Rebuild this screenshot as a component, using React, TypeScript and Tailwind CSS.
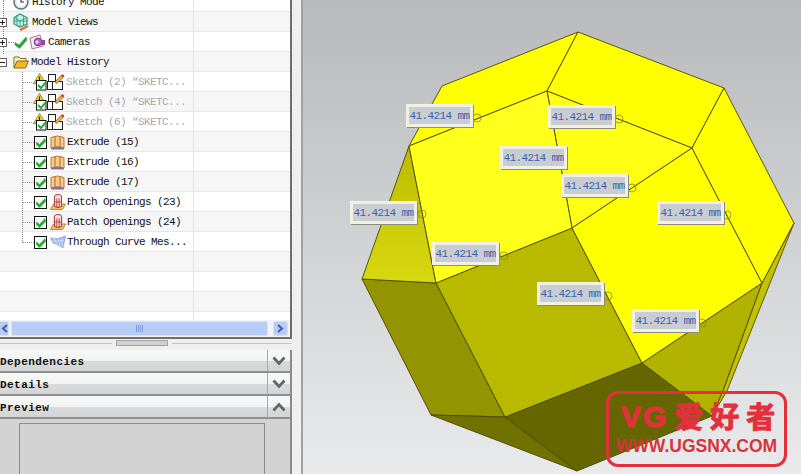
const MONO = "font-['Liberation_Mono',monospace]";

function Check() {
  return (
    <svg width="13" height="13" viewBox="0 0 13 13" className="shrink-0">
      <rect x="0.5" y="0.5" width="12" height="12" fill="#f4fff4" stroke="#111" />
      <path d="M2.5 6 L5.5 8.5 L11 2.5 L11.5 5.5 L5.5 11.5 L2.5 8.5 Z" fill="#25a535" stroke="#25a535" strokeWidth="0.6" />
    </svg>
  );
}

function ClockIcon() {
  return (
    <svg width="16" height="16" viewBox="0 0 16 16" className="shrink-0">
      <circle cx="8" cy="8" r="7" fill="#dfe7f2" stroke="#5d6f8c" strokeWidth="1.4" />
      <circle cx="8" cy="8" r="4.6" fill="#fff" />
      <path d="M8 4.5 V8 H11" fill="none" stroke="#333" strokeWidth="1.2" />
    </svg>
  );
}

function ViewsIcon() {
  return (
    <svg width="16" height="18" viewBox="0 0 16 18" className="shrink-0">
      <path d="M7 1 L14 4.5 V11 L7 14 L1 11 V4.5 Z" fill="#c9efe2" stroke="#1f9c7c" strokeWidth="1.2" />
      <path d="M1 4.5 L7 8 L14 4.5 M7 8 V14 M1 8 L14 8 M4 2.5 V12.5 M10.5 2.5 V12.5" fill="none" stroke="#1f9c7c" strokeWidth="0.8" />
      <path d="M7 17 L15 13" stroke="#e2642c" strokeWidth="2" />
    </svg>
  );
}

function CameraIcon() {
  return (
    <svg width="16" height="16" viewBox="0 0 16 16" className="shrink-0">
      <path d="M1 4 L11 1 L14 12 L3 15 Z" fill="#f7e9ef" stroke="#c2688d" />
      <circle cx="9" cy="8" r="3.8" fill="#b06ac8" stroke="#6d3a8a" />
      <circle cx="8" cy="8" r="1.7" fill="#e3d3f0" />
      <rect x="12" y="6" width="4" height="5" fill="#8a4cab" />
    </svg>
  );
}

function FolderIcon() {
  return (
    <svg width="16" height="14" viewBox="0 0 16 14" className="shrink-0">
      <path d="M1 13 V2 H6 L7.5 3.5 H13 V6" fill="#fff4c8" stroke="#8d6a14" />
      <path d="M1 13 L4 6 H15.5 L12.5 13 Z" fill="#f2b91f" stroke="#8d6a14" />
    </svg>
  );
}

function SketchIcon() {
  return (
    <svg width="33" height="18" viewBox="0 0 33 18" className="shrink-0">
      <path d="M7.5 0.5 L13.5 10.5 H1.5 Z" fill="#f4d93c" stroke="#a18c1c" />
      <path d="M7.5 3.5 V7" stroke="#222" strokeWidth="1.2" />
      <rect x="4.5" y="7.5" width="9.5" height="9.5" fill="#fff" stroke="#111" />
      <path d="M6 11 L9 13.5 L14 7.5 L14.5 10 L9 16.5 L6 13.5 Z" fill="#25a535" />
      <rect x="16.5" y="1.5" width="7" height="7" fill="#fff" stroke="#222" />
      <rect x="15.5" y="8.5" width="5" height="8" fill="#fff" stroke="#222" />
      <rect x="20.5" y="8.5" width="10" height="8" fill="#fff" stroke="#222" />
      <path d="M23 9 L29 2.5 L31 4.5 L25 10.5 Z" fill="#f0b93a" stroke="#8a4b1a" strokeWidth="0.8" />
      <path d="M29 2.5 L30.5 1 L32.5 3 L31 4.5 Z" fill="#c43a2f" />
    </svg>
  );
}

function ExtrudeIcon() {
  return (
    <svg width="15" height="15" viewBox="0 0 15 15" className="shrink-0">
      <path d="M1 2.5 Q7.5 -0.5 14 2.5 V13 Q7.5 10.5 1 13 Z" fill="#f7c98a" stroke="#bd7a25" />
      <path d="M5 1.5 V12 M10 1.5 V12" stroke="#b06d1c" />
      <path d="M1 13 Q7.5 10.5 14 13 V14.5 H1 Z" fill="#7d6fa8" />
    </svg>
  );
}

function PatchIcon() {
  return (
    <svg width="16" height="16" viewBox="0 0 16 16" className="shrink-0">
      <path d="M0.5 15.5 L3.5 10 H15.5 L12.5 15.5 Z" fill="#f3c25a" stroke="#c58a24" />
      <ellipse cx="8" cy="2.5" rx="3.6" ry="2" fill="#fbe9e4" stroke="#a83535" />
      <path d="M4.4 2.5 V12.5 Q8 14.5 11.6 12.5 V2.5" fill="#f6d9d0" stroke="#a83535" />
      <path d="M6.8 4.5 V13.5 M9.2 4.5 V13.5 M4.4 8 H11.6" stroke="#a83535" strokeWidth="0.8" />
    </svg>
  );
}

function MeshIcon() {
  return (
    <svg width="16" height="14" viewBox="0 0 16 14" className="shrink-0">
      <path d="M0.5 3 Q7 5 15.5 1 L13 13 Q7 9 3 8 Z" fill="#9cb4ea" stroke="#7c93cc" strokeWidth="0.6" />
      <path d="M4 3.5 L7 10 M8 3.5 L10 11 M12 2.5 L12 12 M2 6 Q8 7 14 5" stroke="#e4ecfb" strokeWidth="0.8" fill="none" />
    </svg>
  );
}

const featureIcon = (icon: React.ReactNode) => (
  <>
    <span className="w-[11px] border-t border-dotted border-[#999]" />
    <Check />
    <span className="w-[3px]" />
    {icon}
  </>
);

const sketchIcon = (
  <>
    <span className="w-[9px] border-t border-dotted border-[#999]" />
    <SketchIcon />
  </>
);

const treeRows: { label: string; pl?: string; ml?: string; icon?: React.ReactNode; dim?: boolean }[] = [
  { label: 'History Mode', pl: 'pl-[13px]', ml: 'ml-[3px]', icon: <ClockIcon /> },
  { label: 'Model Views', pl: 'pl-[13px]', ml: 'ml-[3px]', icon: <ViewsIcon /> },
  {
    label: 'Cameras',
    pl: 'pl-[8px]',
    ml: 'ml-[3px]',
    icon: (
      <>
        <span className="w-[6px] border-t border-dotted border-[#999]" />
        <svg width="14" height="13" viewBox="0 0 14 13" className="mr-[1px] shrink-0">
          <path d="M1 6.5 L5 9 L12 1 L13 4 L5.5 12.5 L1 9 Z" fill="#25a535" stroke="#25a535" strokeWidth="0.6" />
        </svg>
        <CameraIcon />
      </>
    ),
  },
  { label: 'Model History', pl: 'pl-[13px]', ml: 'ml-[2px]', icon: <FolderIcon /> },
  { label: 'Sketch (2) “SKETC...', pl: 'pl-[23px]', ml: 'ml-[1px]', icon: sketchIcon, dim: true },
  { label: 'Sketch (4) “SKETC...', pl: 'pl-[23px]', ml: 'ml-[1px]', icon: sketchIcon, dim: true },
  { label: 'Sketch (6) “SKETC...', pl: 'pl-[23px]', ml: 'ml-[1px]', icon: sketchIcon, dim: true },
  { label: 'Extrude (15)', pl: 'pl-[23px]', ml: 'ml-[2px]', icon: featureIcon(<ExtrudeIcon />) },
  { label: 'Extrude (16)', pl: 'pl-[23px]', ml: 'ml-[2px]', icon: featureIcon(<ExtrudeIcon />) },
  { label: 'Extrude (17)', pl: 'pl-[23px]', ml: 'ml-[2px]', icon: featureIcon(<ExtrudeIcon />) },
  { label: 'Patch Openings (23)', pl: 'pl-[23px]', ml: 'ml-[1px]', icon: featureIcon(<PatchIcon />) },
  { label: 'Patch Openings (24)', pl: 'pl-[23px]', ml: 'ml-[1px]', icon: featureIcon(<PatchIcon />) },
  { label: 'Through Curve Mes...', pl: 'pl-[23px]', ml: 'ml-[1px]', icon: featureIcon(<MeshIcon />) },
  { label: '' },
  { label: '' },
  { label: '' },
  { label: '' },
];

// position of each dimension tag on the model view
const dimensions = [
  { x: 406, y: 104, cx: 477, cy: 118 },
  { x: 548, y: 105, cx: 619, cy: 119 },
  { x: 500, y: 146 },
  { x: 561, y: 174, cx: 632, cy: 188 },
  { x: 350, y: 201, cx: 422, cy: 214 },
  { x: 657, y: 201, cx: 727, cy: 215 },
  { x: 432, y: 242, cx: 504, cy: 256 },
  { x: 537, y: 282, cx: 608, cy: 296 },
  { x: 632, y: 309, cx: 702, cy: 323 },
];

function Section({ title, open }: { title: string; open?: boolean }) {
  return (
    <div className="flex h-[23px] border-b-2 border-[#8f8f8f] bg-[linear-gradient(#f7f8f8_0%,#f2f3f3_50%,#d9dadb_52%,#d3d4d5_100%)]">
      <div className={`${MONO} flex-1 pt-[4px] text-[11px] leading-[17px] font-bold tracking-[0.45px] text-[#111] whitespace-nowrap`}>
        {title}
      </div>
      <div className="flex w-[23px] items-center justify-center border-l border-[#a8a8a8]">
        <svg width="14" height="10" viewBox="0 0 14 10">
          <path d={open ? 'M1.5 8.5 L7 2.5 L12.5 8.5' : 'M1.5 1.5 L7 7.5 L12.5 1.5'} fill="none" stroke="#666" strokeWidth="2.8" />
        </svg>
      </div>
    </div>
  );
}

function ModelDrawing() {
  const edge = { stroke: '#4a4a00', strokeWidth: 0.9, strokeLinejoin: 'round' as const };
  return (
    <svg width="498" height="474" viewBox="303 0 498 474" className="block">
      <defs>
        <linearGradient id="olive" x1="0" y1="0" x2="0" y2="1">
          <stop offset="0" stopColor="#bcbc00" />
          <stop offset="1" stopColor="#d8d810" />
        </linearGradient>
      </defs>
      <polygon points="362,279 436,283 505,417 431,415" fill="#949400" {...edge} />
      <polygon points="431,415 505,417 577,471" fill="#717100" {...edge} />
      <polygon points="505,417 642,363 712,416 577,471" fill="#666600" {...edge} />
      <polygon points="642,363 762,283 723,391 712,416" fill="#b2b200" {...edge} />
      <polygon points="762,283 794,223 727,391 712,416 723,391" fill="#c2c200" {...edge} />
      <polygon points="409,146 436,283 362,279" fill="url(#olive)" {...edge} />
      <polygon points="436,283 572,228 642,363 505,417" fill="#b9b900" {...edge} />
      <polygon points="578,32 442,86 409,146 547,91" fill="#ffff00" {...edge} />
      <polygon points="578,32 724,88 692,148 547,91" fill="#ffff00" {...edge} />
      <polygon points="547,91 692,148 572,228" fill="#ffff14" {...edge} />
      <polygon points="409,146 547,91 572,228 436,283" fill="#ffff1c" {...edge} />
      <polygon points="692,148 762,283 642,363 572,228" fill="#ffff00" {...edge} />
      <polygon points="724,88 794,223 762,283 692,148" fill="#ffff00" {...edge} />
      {dimensions.map((d) =>
        d.cx ? <circle key={d.x} cx={d.cx} cy={d.cy} r="4" fill="none" stroke="#8a8a20" strokeWidth="0.8" /> : null
      )}
    </svg>
  );
}

export default function App() {
  return (
    <div className="flex h-[474px] w-[801px] overflow-hidden bg-[#efefef]">
      {/* Part navigator */}
      <div className="flex w-[301px] shrink-0 flex-col overflow-hidden">
        <div className="w-[292px] border-r-2 border-b-2 border-[#6e6e6e] bg-white">
          <div className="relative h-[320px] overflow-hidden">
            <div className="-mt-[8px]">
              {treeRows.map((row, i) => (
                <div
                  key={i}
                  className={`flex h-[20px] border-b border-[#e6e6e6] ${i % 2 === 1 ? 'bg-[#f6f6f6]' : 'bg-white'}`}
                >
                  <div className={`flex w-[194px] items-center border-r border-[#e4e4e4] pt-[1px] ${row.pl ?? ''}`}>
                    {row.icon}
                    <span
                      className={`${MONO} text-[11px] tracking-[-0.6px] whitespace-pre ${row.ml ?? ''} ${row.dim ? 'text-[#a8a8a8]' : 'text-[#111]'}`}
                    >
                      {row.label}
                    </span>
                  </div>
                </div>
              ))}
            </div>
            <div className="absolute left-[3px] top-0 h-[54px] border-l border-dotted border-[#888]" />
            <div className="absolute left-[22px] top-[72px] h-[171px] border-l border-dotted border-[#888]" />
            {[22, 42, 62].map((y, i) => (
              <div
                key={y}
                className="absolute -left-[2px] flex h-[9px] w-[9px] items-center justify-center border border-[#666] bg-white"
                style={{ top: y - 4 }}
              >
                <div className="h-px w-[5px] bg-[#222]" />
                {i < 2 && <div className="absolute h-[5px] w-px bg-[#222]" />}
              </div>
            ))}
          </div>
          {/* Horizontal scrollbar */}
          <div className="flex h-[17px] items-center gap-[2px] bg-[#f3f3f3] pr-[2px]">
            <div className="flex h-[15px] w-[9px] items-center justify-center rounded-r-[2px] border border-l-0 border-[#d8e2f6] bg-[#b8cdf5]">
              <svg width="7" height="9" viewBox="0 0 7 9"><path d="M6 1 L2 4.5 L6 8" fill="none" stroke="#3c5ea8" strokeWidth="2" /></svg>
            </div>
            <div className="flex h-[15px] flex-1 items-center justify-center rounded-[2px] border border-[#d8e2f6] bg-[#b8cdf5]">
              <div className="h-[7px] w-[8px] bg-[repeating-linear-gradient(90deg,#7f9bd6_0,#7f9bd6_1px,transparent_1px,transparent_2px)]" />
            </div>
            <div className="ml-[3px] flex h-[15px] w-[15px] items-center justify-center rounded-[2px] border border-[#d8e2f6] bg-[#b8cdf5]">
              <svg width="7" height="9" viewBox="0 0 7 9"><path d="M1 1 L5 4.5 L1 8" fill="none" stroke="#3c5ea8" strokeWidth="2" /></svg>
            </div>
          </div>
        </div>

        {/* Splitter */}
        <div className="flex h-[11px] w-[292px] items-center pb-[3px]">
          <div className="w-[112px] border-t border-[#c4c4c4]" />
          <div className="mx-[4px] h-[6px] w-[52px] border border-[#a4a4a4] bg-[#d0d0d0]" />
          <div className="flex-1 border-t border-[#c4c4c4]" />
        </div>

        <div className="flex w-[292px] flex-1 flex-col border-r-2 border-[#8a8a8a]">
          <Section title="Dependencies" />
          <Section title="Details" />
          <Section title="Preview" open />
          <div className="flex-1 bg-[#d3d3d3] pt-[4px] pl-[19px] pr-[25px]">
            <div className="h-full border-t border-l border-r border-[#8c8c8c]" />
          </div>
        </div>
      </div>

      {/* Model view */}
      <div className="relative w-[500px] shrink-0 border-l-2 border-[#a0a1a2] bg-[linear-gradient(#b7b9ba,#e9eaeb)]">
        <ModelDrawing />
        {dimensions.map((d) => (
          <div
            key={d.x}
            className={`${MONO} absolute h-[23px] w-[67px] border-[3px] border-[#f0f0e4] bg-[#c9cdd2] text-center text-[11px] leading-[19px] tracking-[-0.6px] whitespace-pre text-[#3c62ad] shadow-[1px_1px_0_#8c8c80]`}
            style={{ left: d.x - 303, top: d.y }}
          >
            41.4214 mm
          </div>
        ))}

        {/* Watermark */}
        <div className="absolute left-[303px] top-[391px] flex h-[76px] w-[181px] flex-col rounded-[12px] border-[3px] border-[#e4303c]">
          <div className="mt-[2px] flex h-[40px] items-center pl-[12px] text-[#e4303c] [-webkit-text-stroke:1px_#e4303c]">
            <span className="font-['Liberation_Sans',sans-serif] text-[30px] font-bold tracking-[2px]">VG</span>
            <span className="ml-[6px] font-['Noto_Sans_CJK_SC',sans-serif] text-[29px] font-bold tracking-[7px] whitespace-nowrap">爱好者</span>
          </div>
          <div className="text-center font-['Liberation_Sans',sans-serif] text-[17.5px] leading-[20px] font-bold text-[#d8333c]">WWW.UGSNX.COM</div>
        </div>
      </div>
    </div>
  );
}
